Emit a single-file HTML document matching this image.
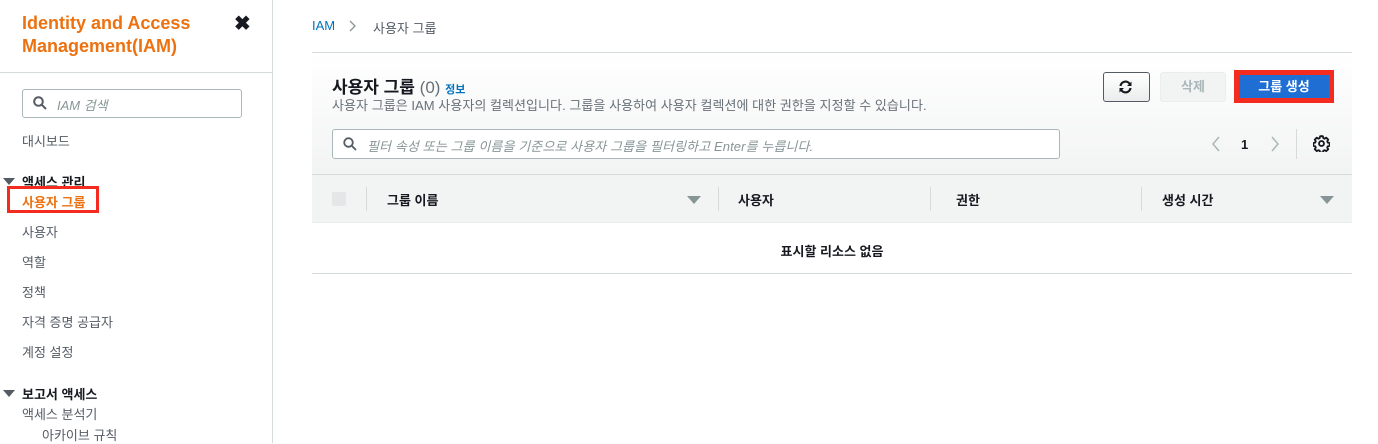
<!DOCTYPE html>
<html><head><meta charset="utf-8"><style>
*{box-sizing:border-box;margin:0;padding:0}
body{width:1378px;height:443px;overflow:hidden;background:#fff;font-family:"Liberation Sans","Noto Sans CJK KR",sans-serif;color:#16191f;position:relative}
.abs{position:absolute}
.side{left:0;top:0;width:273px;height:443px;border-right:1px solid #d5dbdb}
.title{left:22px;top:12px;font-size:18px;font-weight:bold;color:#ec7211;line-height:23px}
.nav{font-size:13px;color:#545b64;left:22px}
.hdr{font-size:13px;font-weight:bold;color:#16191f;left:22px}
.tri{width:0;height:0;border-left:6px solid transparent;border-right:6px solid transparent;border-top:7px solid #545b64}
.panel{left:312px;top:52px;width:1040px;height:122px;border-top:1px solid #d5dbdb;background:linear-gradient(#fff,#f2f3f3)}
.th{left:312px;top:174px;width:1040px;height:49px;background:#f2f3f3;border-top:1px solid #d5dbdb;border-bottom:1px solid #eaeded}
.thl{font-size:13px;font-weight:bold;color:#16191f;top:190px}
.sep{width:1px;height:24px;background:#d5dbdb;top:187px}
.dtri{width:0;height:0;border-left:7px solid transparent;border-right:7px solid transparent;border-top:8px solid #879596}
</style></head><body>
<div class="abs side"></div>
<div class="abs title">Identity and Access<br>Management(IAM)</div>
<div class="abs" style="left:234px;top:11px;font-size:20px;font-weight:bold;color:#16191f">✖</div>
<div class="abs" style="left:0;top:72px;width:273px;height:1px;background:#d5dbdb"></div>
<div class="abs" style="left:22px;top:89px;width:220px;height:29px;border:1px solid #aab7b8;border-radius:3px"></div>
<svg class="abs" style="left:33px;top:96px" width="14" height="14" viewBox="0 0 14 14"><circle cx="5.5" cy="5.5" r="4.3" fill="none" stroke="#545b64" stroke-width="2"/><line x1="8.7" y1="8.7" x2="13" y2="13" stroke="#545b64" stroke-width="2"/></svg>
<div class="abs" style="left:57px;top:95px;font-size:13px;font-style:italic;color:#879596">IAM 검색</div>
<div class="abs nav" style="top:131px">대시보드</div>
<div class="abs tri" style="left:3px;top:178px"></div>
<div class="abs hdr" style="top:172px">액세스 관리</div>
<div class="abs" style="left:7px;top:186px;width:92px;height:27px;border:3px solid #f42c1f"></div>
<div class="abs" style="left:22px;top:192px;font-size:13px;font-weight:bold;color:#ec7211">사용자 그룹</div>
<div class="abs nav" style="top:222px">사용자</div>
<div class="abs nav" style="top:252px">역할</div>
<div class="abs nav" style="top:282px">정책</div>
<div class="abs nav" style="top:312px">자격 증명 공급자</div>
<div class="abs nav" style="top:342px">계정 설정</div>
<div class="abs tri" style="left:3px;top:390px"></div>
<div class="abs hdr" style="top:384px">보고서 액세스</div>
<div class="abs nav" style="top:404px">액세스 분석기</div>
<div class="abs nav" style="top:425px;left:42px">아카이브 규칙</div>

<div class="abs" style="left:312px;top:18px;font-size:13px;color:#0073bb">IAM</div>
<svg class="abs" style="left:349px;top:20px" width="8" height="12" viewBox="0 0 8 12"><path d="M1 1l5 5-5 5" fill="none" stroke="#879596" stroke-width="1.3"/></svg>
<div class="abs" style="left:373px;top:18px;font-size:13px;color:#545b64">사용자 그룹</div>

<div class="abs panel"></div>
<div class="abs" style="left:332px;top:73px;font-size:17px;font-weight:bold">사용자 그룹 <span style="font-weight:normal;color:#687078">(0)</span> <span style="font-size:11px;color:#0073bb;font-weight:bold">정보</span></div>
<div class="abs" style="left:332px;top:95px;font-size:13px;color:#687078;letter-spacing:0.05px">사용자 그룹은 IAM 사용자의 컬렉션입니다. 그룹을 사용하여 사용자 컬렉션에 대한 권한을 지정할 수 있습니다.</div>
<div class="abs" style="left:332px;top:129px;width:728px;height:30px;border:1px solid #aab7b8;border-radius:3px;background:#fff"></div>
<svg class="abs" style="left:343px;top:137px" width="14" height="14" viewBox="0 0 14 14"><circle cx="5.5" cy="5.5" r="4.3" fill="none" stroke="#545b64" stroke-width="1.8"/><line x1="8.7" y1="8.7" x2="13" y2="13" stroke="#545b64" stroke-width="1.8"/></svg>
<div class="abs" style="left:367px;top:136px;font-size:13px;font-style:italic;color:#879596;letter-spacing:0.1px">필터 속성 또는 그룹 이름을 기준으로 사용자 그룹을 필터링하고 Enter를 누릅니다.</div>

<div class="abs" style="left:1103px;top:72px;width:47px;height:30px;border:1px solid #545b64;border-radius:3px;background:linear-gradient(#fff,#eaeded)"></div>
<svg class="abs" style="left:1118px;top:80px" width="15" height="14" viewBox="0 0 15 14"><path d="M2.5 6A5 5 0 0 1 12 4.5M12.5 8A5 5 0 0 1 3 9.5" fill="none" stroke="#16191f" stroke-width="2.2"/><path d="M13.5 1.5V6H9z M1.5 12.5V8H6z" fill="#16191f"/></svg>
<div class="abs" style="left:1160px;top:72px;width:66px;height:30px;border:1px solid #eaeded;border-radius:3px;background:#f2f3f3;text-align:center;line-height:28px;font-size:13px;font-weight:bold;color:#aab7b8">삭제</div>
<div class="abs" style="left:1234px;top:70px;width:100px;height:33px;background:#f42c1f"></div>
<div class="abs" style="left:1239px;top:75px;width:90px;height:23px;background:#1e6ed3;text-align:center;line-height:23px;font-size:13px;font-weight:bold;color:#fff">그룹 생성</div>

<svg class="abs" style="left:1211px;top:136px" width="10" height="16" viewBox="0 0 10 16"><path d="M8 1L2 8l6 7" fill="none" stroke="#aab7b8" stroke-width="1.5"/></svg>
<div class="abs" style="left:1241px;top:137px;font-size:13px;font-weight:bold">1</div>
<svg class="abs" style="left:1270px;top:136px" width="10" height="16" viewBox="0 0 10 16"><path d="M2 1l6 7-6 7" fill="none" stroke="#aab7b8" stroke-width="1.5"/></svg>
<div class="abs" style="left:1296px;top:129px;width:1px;height:30px;background:#d5dbdb"></div>
<svg class="abs" style="left:1313px;top:135px" width="17" height="17" viewBox="0 0 24 24"><path d="M12 1.5l2 .3.6 2.6 1.8.8 2.3-1.4 2.8 2.8-1.4 2.3.8 1.8 2.6.6v4l-2.6.6-.8 1.8 1.4 2.3-2.8 2.8-2.3-1.4-1.8.8-.6 2.6h-4l-.6-2.6-1.8-.8-2.3 1.4-2.8-2.8 1.4-2.3-.8-1.8-2.6-.6v-4l2.6-.6.8-1.8-1.4-2.3 2.8-2.8 2.3 1.4 1.8-.8.6-2.6z" fill="none" stroke="#16191f" stroke-width="2.6" stroke-linejoin="round"/><circle cx="12" cy="12" r="3.5" fill="none" stroke="#16191f" stroke-width="2.6"/></svg>

<div class="abs th"></div>
<div class="abs" style="left:332px;top:192px;width:14px;height:14px;background:#e4e7e7;border-radius:2px"></div>
<div class="abs sep" style="left:366px"></div>
<div class="abs thl" style="left:387px">그룹 이름</div>
<div class="abs dtri" style="left:687px;top:196px"></div>
<div class="abs sep" style="left:718px"></div>
<div class="abs thl" style="left:738px">사용자</div>
<div class="abs sep" style="left:930px"></div>
<div class="abs thl" style="left:956px">권한</div>
<div class="abs sep" style="left:1141px"></div>
<div class="abs thl" style="left:1162px">생성 시간</div>
<div class="abs dtri" style="left:1320px;top:196px"></div>
<div class="abs" style="left:312px;top:241px;width:1040px;text-align:center;font-size:13px;font-weight:bold">표시할 리소스 없음</div>
<div class="abs" style="left:312px;top:273px;width:1040px;height:1px;background:#d5dbdb"></div>
</body></html>
